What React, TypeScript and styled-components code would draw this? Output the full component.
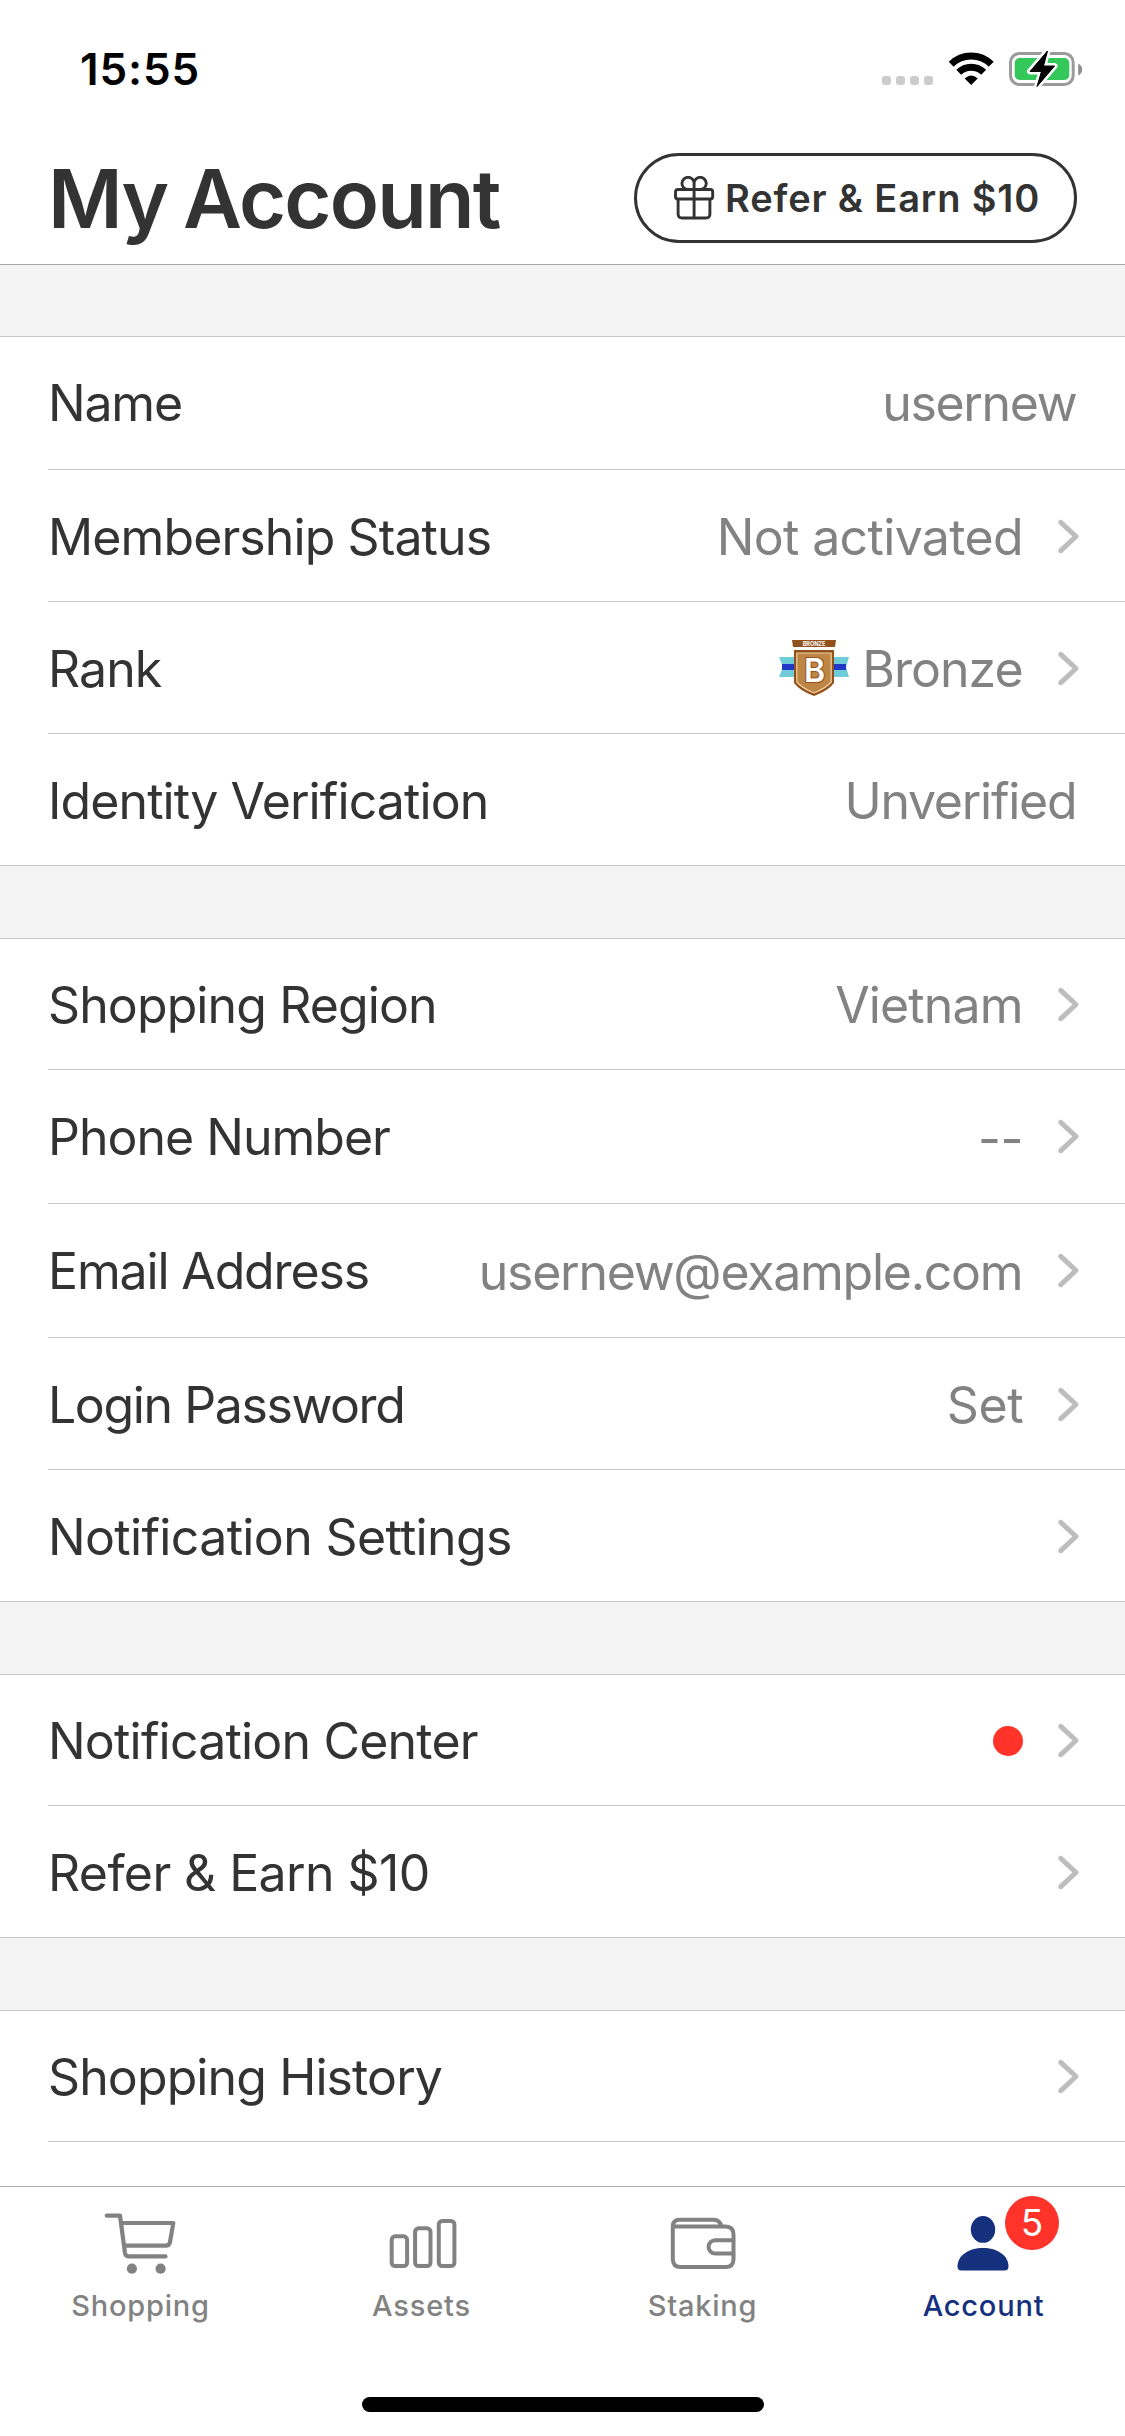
import React from "react";
import styled, { createGlobalStyle } from "styled-components";

const Global = createGlobalStyle`
  * { box-sizing: border-box; }
  body { margin: 0; background: #fff; font-family: Inter, Roboto, "Liberation Sans", sans-serif; }
`;

const Screen = styled.div`
  width: 1125px;
  height: 2436px;
  display: flex;
  flex-direction: column;
  overflow: hidden;
  background: #fff;
  color: #333;
`;

const StatusBar = styled.div`
  flex: none;
  height: 132px;
  padding: 6px 42px 0 80px;
  display: flex;
  align-items: center;
  justify-content: space-between;
`;

const Clock = styled.span`
  font-size: 44px;
  font-weight: 600;
  letter-spacing: 0.9px;
  color: #000;
`;

const StatusIcons = styled.div`
  display: flex;
`;

const Header = styled.header`
  flex: none;
  height: 133px;
  padding: 0 48px 0 48px;
  display: flex;
  align-items: center;
  justify-content: space-between;
  border-bottom: 1px solid #a7a7a7;
`;

const Title = styled.h1`
  margin: 2px 0 0;
  font-size: 81px;
  line-height: 100px;
  font-weight: 600;
  letter-spacing: -1.8px;
  word-spacing: -3px;
`;

const ReferButton = styled.button`
  width: 443px;
  height: 90px;
  padding: 0 0 0 37px;
  display: flex;
  align-items: center;
  gap: 10px;
  border: 3px solid #333;
  border-radius: 45px;
  background: #fff;
  color: #333;
  font: 600 38px Inter, sans-serif;
  letter-spacing: 0.85px;
  white-space: nowrap;
`;

const Content = styled.main`
  flex: 1;
  min-height: 0;
  overflow: hidden;
  background: #f3f3f3;
`;

const Section = styled.section`
  margin-top: 71px;
  background: #fff;
  border-top: 1px solid #c8c8ca;
  border-bottom: 1px solid #c8c8ca;

  & + & {
    margin-top: 72px;
  }
`;

const Row = styled.div<{ $height: number }>`
  height: ${(p) => p.$height}px;
  margin-left: 48px;
  padding: ${(p) => (p.$height > 132 ? 0 : 2)}px 48px 0 0;
  display: flex;
  align-items: center;
  justify-content: space-between;
  border-bottom: 1px solid #c8c8ca;

  &:last-child {
    border-bottom: 0;
  }
`;

const Label = styled.span<{ $spacing?: number }>`
  font-size: 50px;
  line-height: 62px;
  letter-spacing: ${(p) => p.$spacing ?? -0.9}px;
  white-space: nowrap;
`;

const Value = styled(Label)<{ $drop?: number }>`
  padding-top: ${(p) => p.$drop ?? 0}px;
  margin-right: ${(p) => -0.6 - (p.$spacing ?? -0.9)}px;
`;

const Detail = styled.div`
  display: flex;
  align-items: center;
  color: #828282;
`;

const ChevronIcon = styled.svg`
  width: 24px;
  height: 36px;
  margin: 0 -5px 0 35px;
`;

const Dot = styled.i`
  width: 30px;
  height: 30px;
  border-radius: 50%;
  background: #ff3329;
`;

const Badge = styled.svg`
  margin-right: 13px;
  margin-top: -2px;
`;

const TabBar = styled.nav`
  flex: none;
  height: 250px;
  padding: 0;
  display: flex;
  flex-direction: column;
  align-items: center;
  justify-content: space-between;
  border-top: 1px solid #aeaeae;
`;

const Tabs = styled.div`
  width: 100%;
  display: grid;
  grid-template-columns: repeat(4, 281px);
`;

const Tab = styled.div<{ $active?: boolean }>`
  position: relative;
  height: 150px;
  padding-top: 18px;
  display: flex;
  flex-direction: column;
  align-items: center;
  color: ${(p) => (p.$active ? "#15307d" : "#828282")};
`;

const TabLabel = styled.span`
  margin-top: 7px;
  font-size: 29px;
  line-height: 36px;
  font-weight: 500;
  letter-spacing: 0.8px;
`;

const Count = styled.span`
  position: absolute;
  left: 162px;
  top: 9px;
  width: 54px;
  height: 54px;
  border-radius: 50%;
  background: #ff3329;
  color: #fff;
  font-size: 37px;
  line-height: 54px;
  text-align: center;
`;

const HomeIndicator = styled.div`
  width: 402px;
  height: 15px;
  margin-bottom: 24px;
  border-radius: 8px;
  background: #000;
`;

const StatusGlyphs = () => (
  <svg width="202" height="40" viewBox="881 49 202 40">
    <g fill="#ccc">
      {[882, 896, 910, 924].map((x) => (
        <rect key={x} x={x} y="76" width="9" height="9" rx="3" />
      ))}
    </g>
    <g fill="none" stroke="#000" strokeWidth="7">
      <path d="M951.200 64.300a28.500 28.500 0 0 1 40 0" />
      <path d="M958.700 72.300a18 18 0 0 1 25 0" />
    </g>
    <path d="M964.700 78.500q6.500-6 13 0l-6.500 6.500z" fill="#000" />
    <rect x="1010.500" y="53.500" width="62.700" height="31" rx="9" fill="none" stroke="#9b9b9b" strokeWidth="3" />
    <path d="M1078.200 63.500v12q4-2 4-6t-4-6z" fill="#8e8e8e" />
    <rect x="1014.700" y="58" width="54.600" height="22" rx="5" fill="#34c759" />
    <path
      d="M1047.500 51l-17.500 20.500h11.500l-4.500 15 17.500-20.500h-11z"
      fill="#000" stroke="#fff" strokeWidth="6" paintOrder="stroke" strokeLinejoin="round"
    />
    <path d="M1047.500 51l-17.500 20.500h11.500l-4.500 15 17.500-20.500h-11z" stroke="#000" strokeWidth="1" strokeLinejoin="round" />
  </svg>
);

const GiftIcon = () => (
  <svg width="41" height="44" viewBox="0 0 41 44" fill="none" stroke="currentColor" strokeWidth="2.900">
    <rect x="1.500" y="13.500" width="37.200" height="9.500" rx="2.500" />
    <path d="M4.100 23v15q0 4 4 4h23.800q4 0 4-4V23M20.100 13.500V42" />
    <path d="M20.100 13.500V8.200a6.100 6.100 0 1 0-6 5.300M20.100 13.500V8.200a6.100 6.100 0 1 1 6 5.300" />
  </svg>
);

const Chevron = () => (
  <ChevronIcon viewBox="0 0 24 36" fill="none" stroke="#bdbdbd" strokeWidth="5" strokeLinecap="round" strokeLinejoin="round">
    <path d="M2.800 3.300l15.200 14.200L2.800 31.700" />
  </ChevronIcon>
);

const BronzeBadge = () => (
  <Badge width="70" height="56" viewBox="0 0 70 56">
    <path d="M0 17h70l-3 10 3 10H0l4-10z" fill="#6dccd7" />
    <path d="M3 24h64v6H3z" fill="#2237c6" />
    <path d="M13 0h44l-1 7H14z" fill="#91511b" />
    <path d="M15 10h40v33q-6 8-20 13Q21 51 15 43z" fill="#91511b" />
    <path d="M17.800 13h34.400v29q-5 6-17.200 11-12.200-5-17.200-11z" fill="#bd8546" stroke="#f5cfa0" strokeWidth="1.200" />
    <text x="35" y="5.800" textAnchor="middle" fontSize="5.500" fontWeight="700" fill="#fff" fontFamily="Inter">BRONZE</text>
    <text x="35.500" y="41.800" textAnchor="middle" fontSize="32" fontWeight="600" fill="#fff" stroke="#91511b" strokeWidth="2" paintOrder="stroke" fontFamily="Inter">B</text>
  </Badge>
);

const CartIcon = () => (
  <svg width="74" height="76" viewBox="103.500 2205 74 76" fill="none" stroke="currentColor" strokeWidth="4.200" strokeLinecap="round" strokeLinejoin="round">
    <path d="M106.200 2215.600h13.300l5 37.500q.7 3.300 4 3.300H165M121.500 2223H172.800l-3.300 19q-.8 3.600-4 3.600H124" />
    <circle cx="131.400" cy="2268.700" r="5.100" fill="currentColor" stroke="none" />
    <circle cx="160.100" cy="2268.700" r="5.100" fill="currentColor" stroke="none" />
  </svg>
);

const AssetsIcon = () => (
  <svg width="74" height="76" viewBox="384.500 2205 74 76" fill="none" stroke="currentColor" strokeWidth="4">
    <rect x="391.200" y="2236.300" width="15.400" height="29.700" rx="3.500" />
    <rect x="414.600" y="2228.300" width="15.400" height="37.700" rx="3.500" />
    <rect x="438.300" y="2221" width="15.600" height="45" rx="3.500" />
  </svg>
);

const WalletIcon = () => (
  <svg width="74" height="76" viewBox="665.500 2205 74 76" fill="none" stroke="currentColor" strokeWidth="4">
    <path d="M672.300 2226.600h52.700q8 0 8 8v24.400q0 8-8 8h-44.700q-8 0-8-8v-32.500q0-6.800 7-6.800h33.500q7 0 8 7" />
    <path d="M733 2240.200h-18.200a6.600 6.600 0 0 0 0 13.400H733" />
  </svg>
);

const PersonIcon = () => (
  <svg width="74" height="76" viewBox="946.500 2205 74 76" fill="currentColor">
    <ellipse cx="982.500" cy="2229.400" rx="12.200" ry="13.400" />
    <path d="M957 2266.500c0-11 11-18.500 25.500-18.500s25.500 7.500 25.500 18.500q0 4-4 4h-43q-4 0-4-4z" />
  </svg>
);

type Item = {
  label: string;
  height: number;
  value?: string;
  chevron?: boolean;
  badge?: boolean;
  dot?: boolean;
  spacing?: number;
  valueSpacing?: number;
  valueDrop?: number;
};

const sections: Item[][] = [
  [
    { label: "Name", height: 133, spacing: -1.2, value: "usernew", valueSpacing: -1.35 },
    { label: "Membership Status", height: 132, value: "Not activated", valueSpacing: -0.65, chevron: true },
    { label: "Rank", height: 132, value: "Bronze", valueSpacing: -1, chevron: true, badge: true },
    { label: "Identity Verification", height: 131, value: "Unverified", valueSpacing: -1.25 },
  ],
  [
    { label: "Shopping Region", height: 131, value: "Vietnam", valueSpacing: -0.85, chevron: true },
    { label: "Phone Number", height: 134, spacing: -1, value: "--", valueSpacing: -0.4, valueDrop: 5, chevron: true },
    { label: "Email Address", height: 134, spacing: -1.15, value: "usernew@example.com", valueSpacing: -1.26, valueDrop: 3, chevron: true },
    { label: "Login Password", height: 132, spacing: -1.4, value: "Set", valueSpacing: -0.4, chevron: true },
    { label: "Notification Settings", height: 131, spacing: -0.65, chevron: true },
  ],
  [
    { label: "Notification Center", height: 131, spacing: -0.8, chevron: true, dot: true },
    { label: "Refer & Earn $10", height: 131, spacing: -0.6, chevron: true },
  ],
  [
    { label: "Shopping History", height: 131, spacing: -0.9, chevron: true },
    { label: "", height: 132 },
  ],
];

const tabs = [
  { name: "Shopping", icon: <CartIcon /> },
  { name: "Assets", icon: <AssetsIcon /> },
  { name: "Staking", icon: <WalletIcon /> },
  { name: "Account", icon: <PersonIcon />, count: 5 },
];

export default function App() {
  return (
    <Screen>
      <Global />
      <StatusBar>
        <Clock>15:55</Clock>
        <StatusIcons><StatusGlyphs /></StatusIcons>
      </StatusBar>
      <Header>
        <Title>My Account</Title>
        <ReferButton><GiftIcon />Refer &amp; Earn $10</ReferButton>
      </Header>
      <Content>
        {sections.map((items, i) => (
          <Section key={i}>
            {items.map((item, j) => (
              <Row key={j} $height={item.height}>
                <Label $spacing={item.spacing}>{item.label}</Label>
                <Detail>
                  {item.badge && <BronzeBadge />}
                  {item.value && <Value $spacing={item.valueSpacing} $drop={item.valueDrop}>{item.value}</Value>}
                  {item.dot && <Dot />}
                  {item.chevron && <Chevron />}
                </Detail>
              </Row>
            ))}
          </Section>
        ))}
      </Content>
      <TabBar>
        <Tabs>
          {tabs.map((tab) => (
            <Tab key={tab.name} $active={!!tab.count}>
              {tab.icon}
              <TabLabel>{tab.name}</TabLabel>
              {tab.count && <Count>{tab.count}</Count>}
            </Tab>
          ))}
        </Tabs>
        <HomeIndicator />
      </TabBar>
    </Screen>
  );
}
